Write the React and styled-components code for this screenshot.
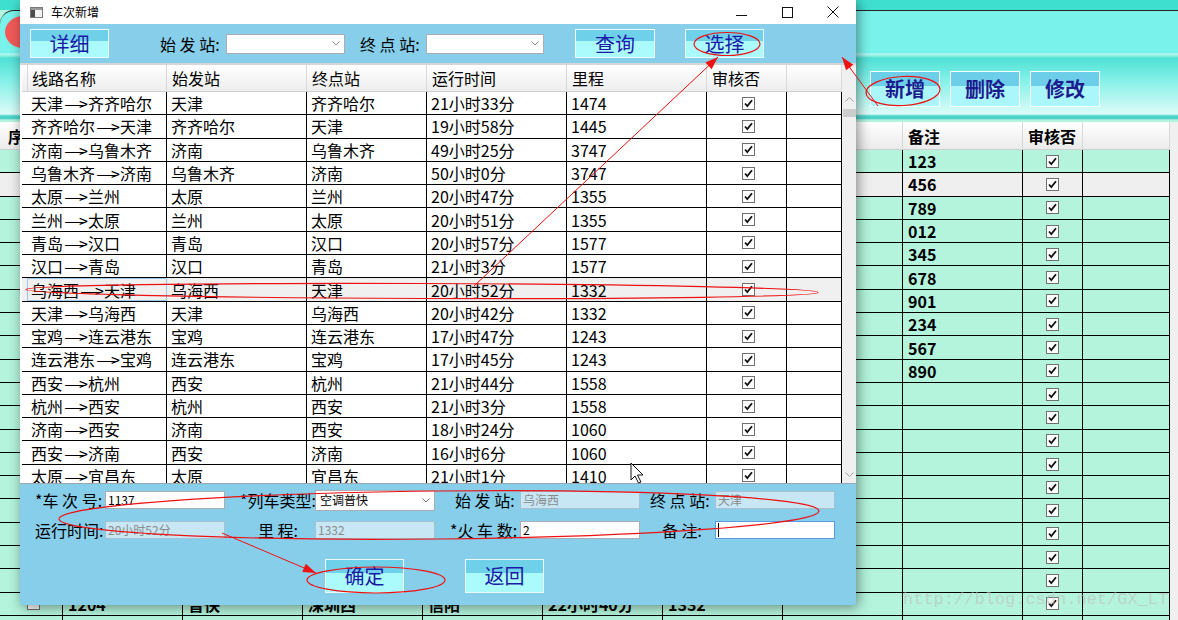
import React from 'react';
import styled, { createGlobalStyle } from 'styled-components';

const GlobalStyle = createGlobalStyle`
  html, body { margin: 0; padding: 0; background: #ffffff; }
  body { font-family: "Noto Sans CJK SC", "Microsoft YaHei", sans-serif; color: #000; }
  * { box-sizing: border-box; }
`;

const FONT = `"Noto Sans CJK SC", "Microsoft YaHei", sans-serif`;

// ---------- background main window ----------
const Stage = styled.div`
  position: relative;
  width: 1178px;
  height: 620px;
  overflow: hidden;
  background: #b4f4dc;
`;

const Backdrop = styled.div`
  display: flex;
  flex-direction: column;
  width: 1178px;
`;

const TopBand = styled.div`
  height: 10px;
  background: #3fdfcf;
`;

const Banner = styled.div`
  height: 43px;
  background: #78f2ea;
  border-top: 1px solid #222;
  border-top-left-radius: 14px;
  display: flex;
  align-items: center;
  padding-left: 5px;
`;

const Logo = styled.div`
  width: 36px;
  height: 32px;
  border-radius: 50%;
  background: #f25a5a;
`;

const BgToolbar = styled.div`
  height: 67px;
  background: linear-gradient(#a6f6ee 0, #a6f6ee 2px, #4fe0d4 5px, #7cefe6 24px, #dcfcf8 61px, #4cd4c8 63px, #4cd4c8 66px, #f4f4f4 67px);
  display: flex;
  align-items: flex-start;
  padding: 18px 0 0 870px;
  gap: 10px;
`;

const BgButton = styled.div`
  width: 70px;
  height: 36px;
  border: 1px solid #f4ffff;
  background: linear-gradient(#6ccee8 0, #6ccee8 42%, #aaf6fa 42%, #aaf6fa 100%);
  color: #1c1c8e;
  font-family: ${FONT};
  font-size: 20px;
  font-weight: bold;
  display: flex;
  align-items: center;
  justify-content: center;
  line-height: 1;
`;

const BG_COLS = '63px 120px 120px 120px 120px 120px 120px 120px 120px 60px 87px';

const BgTableWrap = styled.div`
  display: flex;
  margin-top: 2px;
`;

const BgTable = styled.div`
  width: 1170px;
`;

const BgScroll = styled.div`
  width: 8px;
  background: #f0f0f0;
`;

const BgHeadRow = styled.div`
  display: grid;
  grid-template-columns: ${BG_COLS};
  height: 28px;
  background: linear-gradient(#ffffff, #ebebeb);
  border-bottom: 1px solid #d0d0d0;
`;

const BgHeadCell = styled.div`
  border-right: 1px solid #d8d8d8;
  font-size: 16px;
  font-weight: bold;
  padding-left: ${p => p.$pad ?? 5}px;
  display: flex;
  align-items: center;
  line-height: 1;
  white-space: nowrap;
  overflow: hidden;
`;

const BgRow = styled.div`
  display: grid;
  grid-template-columns: ${BG_COLS};
  height: 23.3px;
  border-bottom: 1px solid #000;
  background: ${p => (p.$sel ? '#efefef' : '#b4f4dc')};
`;

const BgCell = styled.div`
  border-right: 1px solid #000;
  font-size: 16px;
  font-weight: bold;
  padding-left: ${p => p.$pad ?? 5}px;
  display: flex;
  align-items: center;
  justify-content: ${p => (p.$center ? 'center' : 'flex-start')};
  line-height: 1;
  white-space: nowrap;
  overflow: hidden;
`;

// ---------- dialog window ----------
const Dialog = styled.div`
  position: absolute;
  left: 20px;
  top: 0;
  width: 836px;
  height: 605px;
  background: #87ceeb;
  box-shadow: 2px 2px 12px rgba(0, 0, 0, 0.45);
  display: flex;
  flex-direction: column;
`;

const TitleBar = styled.div`
  height: 24px;
  background: #ffffff;
  display: flex;
  align-items: center;
  padding-left: 10px;
`;

const TitleText = styled.span`
  margin-left: 8px;
  font-size: 12px;
  line-height: 1;
`;

const Controls = styled.div`
  margin-left: auto;
  display: flex;
  height: 100%;
`;

const ControlBox = styled.div`
  width: 46px;
  height: 100%;
  display: flex;
  align-items: center;
  justify-content: center;
`;

const Toolbar = styled.div`
  height: 39px;
  display: flex;
  align-items: center;
  padding-left: 10px;
`;

const DlgButton = styled.div`
  width: ${p => p.$w ?? 79}px;
  height: ${p => p.$h ?? 29}px;
  margin-left: ${p => p.$ml ?? 0}px;
  flex-shrink: 0;
  border: 1px solid #eafaff;
  background: linear-gradient(#6fd0ea 0, #6fd0ea 40%, #abfafc 40%, #abfafc 100%);
  color: #1a1aa6;
  font-size: 20px;
  display: flex;
  align-items: center;
  justify-content: center;
  line-height: 1;
`;

const ToolLabel = styled.span`
  width: ${p => p.$w}px;
  margin-left: ${p => p.$ml ?? 0}px;
  flex-shrink: 0;
  font-size: 16px;
  line-height: 1;
  white-space: nowrap;
`;

const Combo = styled.div`
  width: ${p => p.$w ?? 119}px;
  height: ${p => p.$h ?? 20}px;
  margin-left: ${p => p.$ml ?? 0}px;
  flex-shrink: 0;
  background: #ffffff;
  border: 1px solid #abadb3;
  display: flex;
  align-items: center;
  padding: 0 4px;
  font-size: 12px;
  line-height: 1;
`;

const ComboText = styled.span`
  flex: 1;
`;

const GridArea = styled.div`
  height: 420px;
  display: flex;
  border-top: 2px solid #d6d6d6;
  background: #ffffff;
`;

const TableCol = styled.div`
  flex: 1;
  overflow: hidden;
  padding-left: 2px;
`;

const DLG_COLS = '5px 140px 140px 120px 140px 140px 80px 55px';

const HeadRow = styled.div`
  display: grid;
  grid-template-columns: ${DLG_COLS};
  height: 27px;
  background: linear-gradient(#ffffff, #ededed);
  border-bottom: 1px solid #d0d0d0;
`;

const HeadCell = styled.div`
  border-right: 1px solid #d8d8d8;
  font-size: 16px;
  padding-left: 5px;
  display: flex;
  align-items: center;
  line-height: 1;
  white-space: nowrap;
`;

const Row = styled.div`
  display: grid;
  grid-template-columns: ${DLG_COLS};
  height: 23.3px;
  border-bottom: 1px solid #000;
  background: ${p => (p.$sel ? '#f0f0f0' : '#ffffff')};
`;

const Cell = styled.div`
  border-right: 1px solid ${p => (p.$gutter ? 'transparent' : '#000')};
  outline: ${p => (p.$focus ? '1px solid #99c9ef' : 'none')};
  outline-offset: -1px;
  font-size: 16px;
  padding-left: 4px;
  display: flex;
  align-items: center;
  justify-content: ${p => (p.$center ? 'center' : 'flex-start')};
  line-height: 1;
  white-space: nowrap;
  overflow: hidden;
`;

const DashBox = styled.span`
  display: inline-block;
  width: 16px;
  text-align: left;
  padding-left: 1px;
`;

const DashGlyph = styled.span`
  display: inline-block;
  transform: scaleX(1.45);
  transform-origin: left center;
`;

const ScrollBar = styled.div`
  width: 14px;
  background: #f0f0f0;
  display: flex;
  flex-direction: column;
  align-items: center;
  padding-top: 32px;
`;

const Thumb = styled.div`
  width: 13px;
  height: 8px;
  margin-top: 7px;
  background: #cdcdcd;
`;

const ScrollSpacer = styled.div`
  flex: 1;
`;

const Form = styled.div`
  flex: 1;
  border-top: 1px solid #9aa8b0;
  display: flex;
  flex-direction: column;
  padding: 1px 0 0 15px;
`;

const FormGrid = styled.div`
  display: grid;
  grid-template-columns: 70px 120px 90px 120px 85px 120px 75px 120px;
  grid-auto-rows: 30px;
  align-items: center;
`;

const FormLabel = styled.span`
  padding-left: ${p => p.$indent ?? 0}px;
  font-size: 16px;
  line-height: 1;
  white-space: nowrap;
`;

const Field = styled.div`
  height: 18px;
  background: ${p => (p.$disabled ? '#c8e7f5' : '#ffffff')};
  border: 1px solid ${p => (p.$focus ? '#5b9be2' : p.$disabled ? '#a8c0d0' : '#abadb3')};
  color: ${p => (p.$disabled ? '#8a8a8a' : '#000')};
  font-size: 12px;
  line-height: 1;
  display: flex;
  align-items: center;
  padding-left: 2px;
  white-space: nowrap;
`;

const Caret = styled.span`
  width: 1px;
  height: 14px;
  background: #000;
`;

const ButtonRow = styled.div`
  display: flex;
  gap: 61px;
  padding-left: 290px;
  margin-top: 14px;
`;

const Watermark = styled.div`
  position: absolute;
  left: 903px;
  top: 590px;
  font-family: "Liberation Mono", monospace;
  font-size: 17px;
  color: rgba(190, 190, 190, 0.6);
  pointer-events: none;
`;

const Overlay = styled.svg`
  position: absolute;
  left: 0;
  top: 0;
  pointer-events: none;
`;

// ---------- small drawings ----------
const CheckBox = () => (
  <svg width="13" height="13" viewBox="0 0 13 13">
    <rect x="0.5" y="0.5" width="12" height="12" fill="#fff" stroke="#707070" />
    <path d="M3 6.5 L5.3 9 L10 3.2" fill="none" stroke="#111" strokeWidth="1.8" />
  </svg>
);

const EmptyBox = () => (
  <svg width="13" height="13" viewBox="0 0 13 13">
    <rect x="0.5" y="0.5" width="12" height="12" fill="#fff" stroke="#707070" />
  </svg>
);

const Chevron = ({ color = '#8a8a8a' }) => (
  <svg width="8" height="5" viewBox="0 0 8 5">
    <path d="M0.5 0.5 L4 4 L7.5 0.5" fill="none" stroke={color} strokeWidth="1" />
  </svg>
);

const AppIcon = () => (
  <svg width="13" height="11" viewBox="0 0 13 11">
    <rect x="0.5" y="0.5" width="12" height="10" fill="#f2f2f2" stroke="#7a7a7a" />
    <rect x="1" y="1" width="4" height="9" fill="#4a4a4a" />
    <rect x="1" y="1" width="11" height="2" fill="#9a9a9a" />
  </svg>
);

const RouteName = ({ text }) => {
  const [from, to] = text.split('—');
  return (
    <>
      {from}
      <DashBox><DashGlyph>—</DashGlyph></DashBox>
      {to}
    </>
  );
};

const arrowHead = (x1, y1, x2, y2, len = 13, half = 4.5) => {
  const a = Math.atan2(y2 - y1, x2 - x1);
  const bx = x2 - len * Math.cos(a);
  const by = y2 - len * Math.sin(a);
  const px = -Math.sin(a) * half;
  const py = Math.cos(a) * half;
  return `${x2},${y2} ${bx + px},${by + py} ${bx - px},${by - py}`;
};

const Arrow = ({ x1, y1, x2, y2 }) => (
  <g>
    <line x1={x1} y1={y1} x2={x2} y2={y2} stroke="#ee1111" strokeWidth="1" />
    <polygon points={arrowHead(x1, y1, x2, y2)} fill="#ee1111" />
  </g>
);

// ---------- data ----------
const routes = [
  ['天津—>齐齐哈尔', '天津', '齐齐哈尔', '21小时33分', '1474'],
  ['齐齐哈尔—>天津', '齐齐哈尔', '天津', '19小时58分', '1445'],
  ['济南—>乌鲁木齐', '济南', '乌鲁木齐', '49小时25分', '3747'],
  ['乌鲁木齐—>济南', '乌鲁木齐', '济南', '50小时0分', '3747'],
  ['太原—>兰州', '太原', '兰州', '20小时47分', '1355'],
  ['兰州—>太原', '兰州', '太原', '20小时51分', '1355'],
  ['青岛—>汉口', '青岛', '汉口', '20小时57分', '1577'],
  ['汉口—>青岛', '汉口', '青岛', '21小时3分', '1577'],
  ['乌海西—>天津', '乌海西', '天津', '20小时52分', '1332'],
  ['天津—>乌海西', '天津', '乌海西', '20小时42分', '1332'],
  ['宝鸡—>连云港东', '宝鸡', '连云港东', '17小时47分', '1243'],
  ['连云港东—>宝鸡', '连云港东', '宝鸡', '17小时45分', '1243'],
  ['西安—>杭州', '西安', '杭州', '21小时44分', '1558'],
  ['杭州—>西安', '杭州', '西安', '21小时3分', '1558'],
  ['济南—>西安', '济南', '西安', '18小时24分', '1060'],
  ['西安—>济南', '西安', '济南', '16小时6分', '1060'],
  ['太原—>宜昌东', '太原', '宜昌东', '21小时1分', '1410'],
];

const remarks = ['123', '456', '789', '012', '345', '678', '901', '234', '567', '890'];

const trains = Array.from({ length: 21 }, (_, i) =>
  i === 19
    ? ['1204', '普快', '深圳西', '信阳', '22小时40分', '1332', '']
    : [String(1100 + i * 7), '普快', '天津', '济南', '4小时20分', '357', '']
);

const bgHeads = ['序号', '车次号', '列车类型', '始发站', '终点站', '运行时间', '里程', '火车数', '备注', '审核否', ''];

export default function App() {
  return (
    <>
      <GlobalStyle />
      <Stage>
        <Backdrop>
          <TopBand />
          <Banner>
            <Logo />
          </Banner>
          <BgToolbar>
            <BgButton>新增</BgButton>
            <BgButton>删除</BgButton>
            <BgButton>修改</BgButton>
          </BgToolbar>
          <BgTableWrap>
            <BgTable>
              <BgHeadRow>
                {bgHeads.map((h, i) => (
                  <BgHeadCell key={i} $pad={i === 0 ? 8 : 5}>{h}</BgHeadCell>
                ))}
              </BgHeadRow>
              {trains.map((t, i) => (
                <BgRow key={i} $sel={i === 1}>
                  <BgCell $pad={27}><EmptyBox /></BgCell>
                  {t.map((v, j) => (
                    <BgCell key={j}>{v}</BgCell>
                  ))}
                  <BgCell>{remarks[i] || ''}</BgCell>
                  <BgCell $center $pad={0}><CheckBox /></BgCell>
                  <BgCell />
                </BgRow>
              ))}
            </BgTable>
            <BgScroll />
          </BgTableWrap>
        </Backdrop>

        <Dialog>
          <TitleBar>
            <AppIcon />
            <TitleText>车次新增</TitleText>
            <Controls>
              <ControlBox>
                <svg width="11" height="11" viewBox="0 0 11 11">
                  <line x1="0" y1="8.5" x2="11" y2="8.5" stroke="#111" />
                </svg>
              </ControlBox>
              <ControlBox>
                <svg width="11" height="11" viewBox="0 0 11 11">
                  <rect x="0.5" y="0.5" width="10" height="10" fill="none" stroke="#111" />
                </svg>
              </ControlBox>
              <ControlBox>
                <svg width="12" height="12" viewBox="0 0 12 12">
                  <path d="M0.5 0.5 L11.5 11.5 M11.5 0.5 L0.5 11.5" stroke="#111" />
                </svg>
              </ControlBox>
            </Controls>
          </TitleBar>

          <Toolbar>
            <DlgButton>详细</DlgButton>
            <ToolLabel $ml={51} $w={65}>始 发 站:</ToolLabel>
            <Combo $ml={1}>
              <ComboText />
              <Chevron />
            </Combo>
            <ToolLabel $ml={15} $w={65}>终 点 站:</ToolLabel>
            <Combo $ml={1} $w={118}>
              <ComboText />
              <Chevron />
            </Combo>
            <DlgButton $ml={31} $w={80}>查询</DlgButton>
            <DlgButton $ml={30}>选择</DlgButton>
          </Toolbar>

          <GridArea>
            <TableCol>
              <HeadRow>
                <HeadCell />
                <HeadCell>线路名称</HeadCell>
                <HeadCell>始发站</HeadCell>
                <HeadCell>终点站</HeadCell>
                <HeadCell>运行时间</HeadCell>
                <HeadCell>里程</HeadCell>
                <HeadCell>审核否</HeadCell>
                <HeadCell />
              </HeadRow>
              {routes.map((r, i) => (
                <Row key={i} $sel={i === 8}>
                  <Cell $gutter />
                  <Cell $focus={i === 8}><RouteName text={r[0]} /></Cell>
                  {r.slice(1).map((v, j) => (
                    <Cell key={j}>{v}</Cell>
                  ))}
                  <Cell $center><CheckBox /></Cell>
                  <Cell />
                </Row>
              ))}
            </TableCol>
            <ScrollBar>
              <svg width="9" height="5" viewBox="0 0 9 5">
                <path d="M0.5 4.5 L4.5 0.5 L8.5 4.5" fill="none" stroke="#a0a0a0" />
              </svg>
              <Thumb />
              <ScrollSpacer />
              <svg width="9" height="5" viewBox="0 0 9 5" style={{ marginBottom: 6 }}>
                <path d="M0.5 0.5 L4.5 4.5 L8.5 0.5" fill="none" stroke="#a0a0a0" />
              </svg>
            </ScrollBar>
          </GridArea>

          <Form>
            <FormGrid>
              <FormLabel>*车 次 号:</FormLabel>
              <Field>1137</Field>
              <FormLabel $indent={15}>*列车类型:</FormLabel>
              <Combo $w={120} $h={21}>
                <ComboText>空调普快</ComboText>
                <Chevron color="#777" />
              </Combo>
              <FormLabel $indent={20}>始 发 站:</FormLabel>
              <Field $disabled>乌海西</Field>
              <FormLabel $indent={10}>终 点 站:</FormLabel>
              <Field $disabled>天津</Field>

              <FormLabel>运行时间:</FormLabel>
              <Field $disabled>20小时52分</Field>
              <FormLabel $indent={33}>里 程:</FormLabel>
              <Field $disabled>1332</Field>
              <FormLabel $indent={15}>*火 车 数:</FormLabel>
              <Field>2</Field>
              <FormLabel $indent={22}>备 注:</FormLabel>
              <Field $focus><Caret /></Field>
            </FormGrid>
            <ButtonRow>
              <DlgButton $h={34}>确定</DlgButton>
              <DlgButton $h={34}>返回</DlgButton>
            </ButtonRow>
          </Form>
        </Dialog>

        <Watermark>http://blog.csdn.net/GX_LT</Watermark>

        <Overlay width="1178" height="620" viewBox="0 0 1178 620">
          <g fill="none" stroke="#ee1111" strokeWidth="1.2">
            <ellipse cx="727" cy="44" rx="33" ry="11.5" />
            <ellipse cx="903" cy="91" rx="37" ry="14.5" transform="rotate(-3 903 91)" />
            <ellipse cx="422" cy="291" rx="396" ry="7.5" transform="rotate(0.2 422 291)" />
            <ellipse cx="439" cy="515" rx="380" ry="24" transform="rotate(-0.6 439 515)" />
            <ellipse cx="376" cy="580" rx="69" ry="13" />
          </g>
          <Arrow x1={474} y1={286} x2={718} y2={57} />
          <Arrow x1={878} y1={106} x2={842} y2={57} />
          <Arrow x1={222} y1={533} x2={316} y2={573} />
          <path
            d="M631 463 L631 480 L635 476 L638.5 483 L641 482 L637.5 475 L643 475 Z"
            fill="#fff"
            stroke="#111"
            strokeWidth="1"
          />
        </Overlay>
      </Stage>
    </>
  );
}
